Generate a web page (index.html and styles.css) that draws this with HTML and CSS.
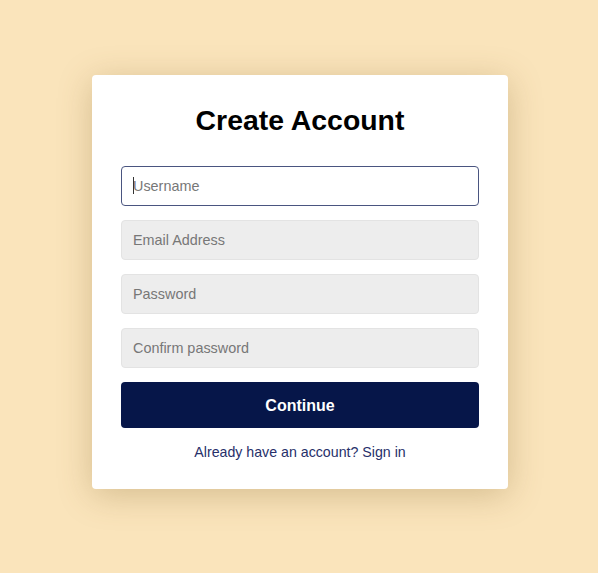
FILE: index.html
```html
<!DOCTYPE html>
<html lang="en">
<head>
<meta charset="utf-8">
<title>Create Account</title>
<link rel="stylesheet" href="styles.css">
</head>
<body>
<main class="page">
  <form class="card">
    <h1 class="title">Create Account</h1>
    <div class="fields">
      <div class="field-wrap">
        <input class="field field--focused" type="text" placeholder="Username">
        <span class="caret"></span>
      </div>
      <input class="field" type="email" placeholder="Email Address">
      <input class="field" type="password" placeholder="Password">
      <input class="field" type="password" placeholder="Confirm password">
      <button class="btn" type="button">Continue</button>
    </div>
    <p class="footer"><a class="link" href="#">Already have an account? Sign in</a></p>
  </form>
</main>
</body>
</html>
```

FILE: styles.css
```css
* { box-sizing: border-box; }
html, body { margin: 0; padding: 0; }
body {
  background: #fae4bb;
  font-family: "Liberation Sans", Arial, Helvetica, sans-serif;
}
.page {
  min-height: 573px;
  display: flex;
  justify-content: center;
  align-items: flex-start;
  padding-top: 75px;
  padding-left: 2px;
}
.card {
  width: 416px;
  height: 414px;
  background: #ffffff;
  border-radius: 4px;
  box-shadow: 0 6px 34px rgba(120, 85, 30, 0.28);
  padding: 28px 29px 29px;
  display: flex;
  flex-direction: column;
}
.title {
  margin: 0 0 29px;
  font-size: 28.4px;
  line-height: 34px;
  font-weight: 700;
  text-align: center;
  color: #000;
}
.fields {
  display: flex;
  flex-direction: column;
  gap: 14px;
}
.field-wrap { position: relative; }
.field {
  display: block;
  width: 100%;
  height: 40px;
  margin: 0;
  padding: 0 11px;
  border: 1px solid #e3e3e3;
  border-radius: 4px;
  background: #ededed;
  font-family: inherit;
  font-size: 14.4px;
  color: #222;
  outline: none;
}
.field::placeholder { color: #777777; opacity: 1; }
.field--focused {
  background: #ffffff;
  border: 1.5px solid #4a5580;
}
.caret {
  position: absolute;
  left: 12px;
  top: 11px;
  width: 1px;
  height: 17px;
  background: #333;
}
.btn {
  display: block;
  width: 100%;
  height: 46px;
  border: none;
  border-radius: 4px;
  padding: 2px 0 0;
  background: #061649;
  color: #ffffff;
  font-family: inherit;
  font-size: 16px;
  font-weight: 700;
  cursor: pointer;
}
.footer {
  margin: 16px 0 0;
  text-align: center;
  font-size: 14.2px;
  line-height: 17px;
}
.link {
  color: #27306a;
  text-decoration: none;
}
```
